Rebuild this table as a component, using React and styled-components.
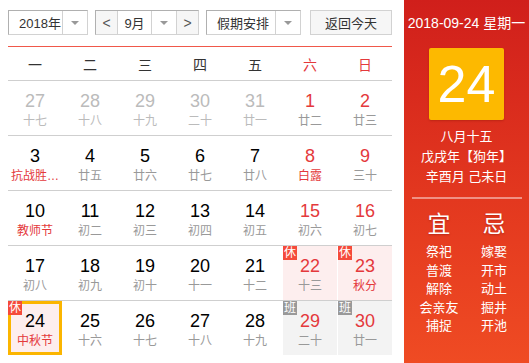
import styled, { createGlobalStyle, css } from "styled-components";

const GlobalStyle = createGlobalStyle`
  body {
    margin: 0;
    font-family: "Liberation Sans", Arial, "Noto Sans CJK SC", sans-serif;
    background: #fff;
  }
`;

const Wrap = styled.div`
  display: flex;
  width: 529px;
  height: 363px;
  overflow: hidden;
`;

const Left = styled.div`
  width: 384px;
  padding: 10px 12px 0 8px;
`;

const Toolbar = styled.div`
  display: flex;
  height: 25px;
  gap: 7px;
  margin-bottom: 11px;
`;

const SelectBox = styled.div`
  display: flex;
  width: ${(p) => p.$w}px;
  height: 25px;
  box-sizing: border-box;
  border: 1px solid #d2d2d2;
  border-top-color: #b0b0b0;
  border-left-color: #b0b0b0;
  font-size: 13px;
  color: #333;
`;

const SelectText = styled.div`
  flex: 1;
  min-width: 0;
  display: flex;
  align-items: center;
  white-space: nowrap;
  justify-content: ${(p) => (p.$center ? "center" : "flex-start")};
  padding-left: ${(p) => (p.$center ? 0 : p.$pad || 10)}px;
`;

const Caret = styled.div`
  width: 24px;
  flex-shrink: 0;
  border-left: 1px solid #d2d2d2;
  display: flex;
  align-items: center;
  justify-content: center;
  &::after {
    content: "";
    border-left: 4px solid transparent;
    border-right: 4px solid transparent;
    border-top: 4px solid #999;
  }
`;

const ArrowBtn = styled.div`
  width: 21px;
  flex-shrink: 0;
  display: flex;
  align-items: center;
  justify-content: center;
  background: #f6f6f6;
  color: #555;
  font-size: 14px;
  ${(p) => (p.$left ? "border-right" : "border-left")}: 1px solid #d2d2d2;
`;

const TodayBtn = styled.div`
  margin-left: auto;
  width: 82px;
  height: 25px;
  box-sizing: border-box;
  border: 1px solid #d2d2d2;
  background: #f6f6f6;
  font-size: 13px;
  color: #333;
  display: flex;
  align-items: center;
  justify-content: center;
`;

const WeekHead = styled.div`
  display: grid;
  grid-template-columns: repeat(7, 54px);
  column-gap: 1px;
  height: 33px;
  border-top: 1px solid #f0584a;
  align-items: center;
`;

const WeekDay = styled.div`
  text-align: center;
  font-size: 14px;
  color: ${(p) => (p.$red ? "#e4393c" : "#333")};
`;

const Row = styled.div`
  display: grid;
  grid-template-columns: repeat(7, 54px);
  column-gap: 1px;
  border-top: 1px solid #cfcfcf;
  height: 54px;
`;

const Cell = styled.div`
  position: relative;
  box-sizing: border-box;
  display: flex;
  flex-direction: column;
  align-items: center;
  padding-top: 10px;
  background: ${(p) =>
    p.$kind === "rest" ? "#fdeeee" : p.$kind === "work" ? "#f3f3f3" : "transparent"};
  ${(p) =>
    p.$today &&
    css`
      border: 3px solid #fbb500;
      background: #fdeeee;
      padding-top: 7px;
    `}
`;

const Num = styled.div`
  font-size: 18px;
  line-height: 20px;
  color: ${(p) => (p.$dim ? "#bbb" : p.$red ? "#e4393c" : "#000")};
`;

const Lunar = styled.div`
  margin-top: 2px;
  font-size: 12px;
  line-height: 16px;
  white-space: nowrap;
  color: ${(p) => (p.$dim ? "#bbb" : p.$red ? "#e4393c" : "#999")};
`;

const Badge = styled.div`
  position: absolute;
  top: ${(p) => (p.$today ? -3 : 0)}px;
  left: ${(p) => (p.$today ? -3 : 0)}px;
  width: 14px;
  height: 14px;
  font-size: 12px;
  line-height: 14px;
  text-align: center;
  color: #fff;
  background: ${(p) => (p.$work ? "#999" : "#f54a3a")};
`;

const Panel = styled.div`
  width: 125px;
  height: 363px;
  background: linear-gradient(180deg, #d01f1b 0%, #e3381f 55%, #ef4b23 100%);
  color: #fff;
  display: flex;
  flex-direction: column;
  align-items: center;
`;

const PanelDate = styled.div`
  margin-top: 14px;
  font-size: 14px;
  line-height: 18px;
  white-space: nowrap;
`;

const BigDay = styled.div`
  margin-top: 16px;
  width: 75px;
  height: 72px;
  border-radius: 2px;
  background: #fdb900;
  font-size: 52px;
  display: flex;
  align-items: center;
  justify-content: center;
  box-shadow: 0 1px 2px rgba(120, 20, 0, 0.3);
`;

const LunarInfo = styled.div`
  margin-top: 7px;
  font-size: 13px;
  line-height: 20px;
  text-align: center;
`;

const Divider = styled.div`
  margin-top: 10px;
  width: 110px;
  height: 2px;
  background: rgba(255, 255, 255, 0.45);
`;

const Columns = styled.div`
  display: grid;
  grid-template-columns: 55px 55px;
  margin-top: 12px;
`;

const Col = styled.div`
  display: flex;
  flex-direction: column;
  align-items: center;
`;

const ColHead = styled.div`
  font-size: 23px;
  line-height: 26px;
  margin-bottom: 6px;
  text-shadow: 0 1px 2px rgba(100, 0, 0, 0.35);
`;

const Item = styled.div`
  font-size: 13px;
  line-height: 18.5px;
`;

const weekdays = ["一", "二", "三", "四", "五", "六", "日"];

const rows = [
  [
    { n: 27, l: "十七", dim: 1 },
    { n: 28, l: "十八", dim: 1 },
    { n: 29, l: "十九", dim: 1 },
    { n: 30, l: "二十", dim: 1 },
    { n: 31, l: "廿一", dim: 1 },
    { n: 1, l: "廿二", red: 1 },
    { n: 2, l: "廿三", red: 1 },
  ],
  [
    { n: 3, l: "抗战胜…", lr: 1 },
    { n: 4, l: "廿五" },
    { n: 5, l: "廿六" },
    { n: 6, l: "廿七" },
    { n: 7, l: "廿八" },
    { n: 8, l: "白露", red: 1, lr: 1 },
    { n: 9, l: "三十", red: 1 },
  ],
  [
    { n: 10, l: "教师节", lr: 1 },
    { n: 11, l: "初二" },
    { n: 12, l: "初三" },
    { n: 13, l: "初四" },
    { n: 14, l: "初五" },
    { n: 15, l: "初六", red: 1 },
    { n: 16, l: "初七", red: 1 },
  ],
  [
    { n: 17, l: "初八" },
    { n: 18, l: "初九" },
    { n: 19, l: "初十" },
    { n: 20, l: "十一" },
    { n: 21, l: "十二" },
    { n: 22, l: "十三", red: 1, kind: "rest" },
    { n: 23, l: "秋分", red: 1, lr: 1, kind: "rest" },
  ],
  [
    { n: 24, l: "中秋节", lr: 1, today: 1, kind: "rest" },
    { n: 25, l: "十六" },
    { n: 26, l: "十七" },
    { n: 27, l: "十八" },
    { n: 28, l: "十九" },
    { n: 29, l: "二十", red: 1, kind: "work" },
    { n: 30, l: "廿一", red: 1, kind: "work" },
  ],
];

const good = ["祭祀", "普渡", "解除", "会亲友", "捕捉"];
const bad = ["嫁娶", "开市", "动土", "掘井", "开池"];

export default function App() {
  return (
    <Wrap>
      <GlobalStyle />
      <Left>
        <Toolbar>
          <SelectBox $w={80}>
            <SelectText $pad={10}>2018年</SelectText>
            <Caret />
          </SelectBox>
          <SelectBox $w={104}>
            <ArrowBtn $left>&lt;</ArrowBtn>
            <SelectText $center>9月</SelectText>
            <Caret />
            <ArrowBtn>&gt;</ArrowBtn>
          </SelectBox>
          <SelectBox $w={95}>
            <SelectText $pad={10}>假期安排</SelectText>
            <Caret />
          </SelectBox>
          <TodayBtn>返回今天</TodayBtn>
        </Toolbar>
        <WeekHead>
          {weekdays.map((d, i) => (
            <WeekDay key={d} $red={i > 4}>
              {d}
            </WeekDay>
          ))}
        </WeekHead>
        {rows.map((r, ri) => (
          <Row key={ri}>
            {r.map((c) => (
              <Cell key={c.n + "-" + ri} $kind={c.kind} $today={c.today}>
                {c.kind && (
                  <Badge $work={c.kind === "work"} $today={c.today}>
                    {c.kind === "work" ? "班" : "休"}
                  </Badge>
                )}
                <Num $dim={c.dim} $red={c.red}>
                  {c.n}
                </Num>
                <Lunar $dim={c.dim} $red={c.lr}>
                  {c.l}
                </Lunar>
              </Cell>
            ))}
          </Row>
        ))}
      </Left>
      <Panel>
        <PanelDate>2018-09-24 星期一</PanelDate>
        <BigDay>24</BigDay>
        <LunarInfo>
          八月十五
          <br />
          戊戌年【狗年】
          <br />
          辛酉月 己未日
        </LunarInfo>
        <Divider />
        <Columns>
          <Col>
            <ColHead>宜</ColHead>
            {good.map((g) => (
              <Item key={g}>{g}</Item>
            ))}
          </Col>
          <Col>
            <ColHead>忌</ColHead>
            {bad.map((b) => (
              <Item key={b}>{b}</Item>
            ))}
          </Col>
        </Columns>
      </Panel>
    </Wrap>
  );
}
